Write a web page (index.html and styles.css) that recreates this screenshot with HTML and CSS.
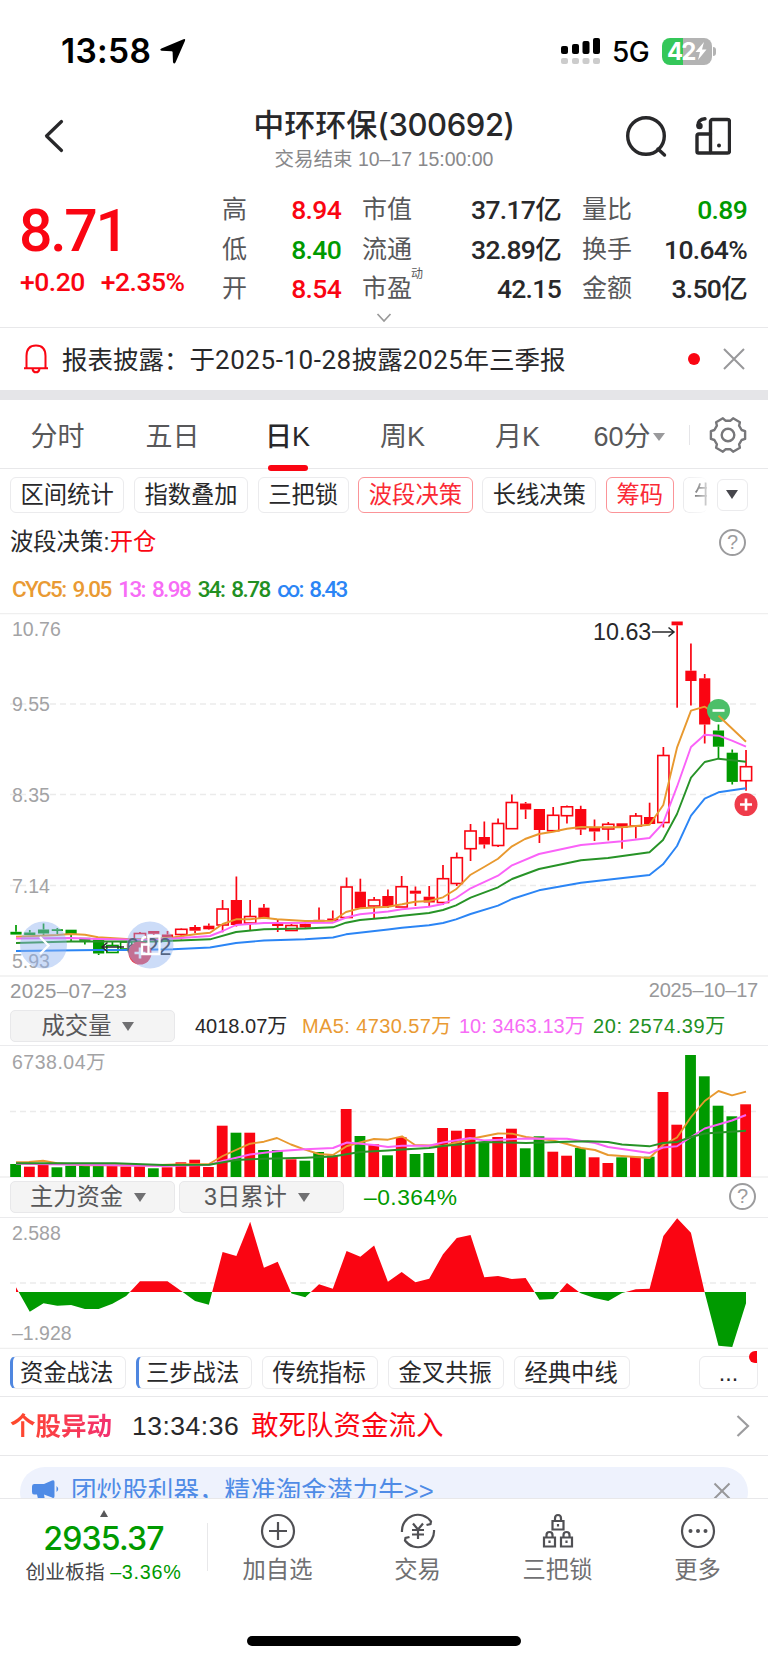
FILE: index.html
```html
<!DOCTYPE html>
<html lang="zh-CN">
  <head>
    <meta charset="UTF-8" />
    <meta name="viewport" content="width=device-width, initial-scale=1.0" />
    <title>中环环保(300692)</title>
    <link rel="stylesheet" href="styles.css">
  </head>
  <body>
    <div class="status-bar">
      <span class="clock">13:58</span>
      <svg class="location" width="27" height="27" viewBox="0 0 27 27">
        <path d="M24.5 1.2 Q26.8 0.2 26 2.7 L16.6 24.3 Q15.2 26.8 14 24.2 L13.6 14 Q13.5 13.2 12.6 13.2 L2.6 12.8 Q0 12 2.4 10.6 Z" />
      </svg>
      <svg class="signal" width="40" height="28" viewBox="0 0 40 28">
        <g fill="#000">
          <rect x="0" y="9" width="7" height="8" rx="2" />
          <rect x="11" y="7" width="7" height="10" rx="2" />
          <rect x="21.5" y="4" width="7" height="13" rx="2" />
          <rect x="32" y="1" width="7" height="16" rx="2" />
        </g>
        <g fill="#ccc">
          <rect x="0" y="21" width="7" height="6" rx="2" />
          <rect x="11" y="21" width="7" height="6" rx="2" />
          <rect x="21.5" y="21" width="7" height="6" rx="2" />
          <rect x="32" y="21" width="7" height="6" rx="2" />
        </g>
      </svg>
      <span class="network">5G</span>
      <div class="battery">
        <span>42</span>
        <svg width="12" height="18" viewBox="0 0 12 18"><path d="M9 0 L0.5 10 H5 L3 18 L11.5 7.5 H7 Z" fill="#fff" /></svg>
      </div>
      <i class="battery-tip"></i>
    </div>

    <div class="nav">
      <svg class="back" width="22" height="34" viewBox="0 0 22 34">
        <path d="M18.5 2.5 L3.5 17 L18.5 31.5" />
      </svg>
      <div class="nav-title">
        <h1>中环环保<span>(300692)</span></h1>
        <p>交易结束 <span>10–17 15:00:00</span></p>
      </div>
      <svg class="nav-icons" width="106" height="44" viewBox="0 0 106 44">
        <circle cx="21" cy="22" r="18.3" />
        <path d="M33 35 L39.5 41" />
        <rect x="85.5" y="5.5" width="19" height="33.5" rx="2" />
        <path d="M85.5 39 H73.5 Q72 39 72 37.5 V22 Q72 20 74 20 H85.5" />
        <path d="M80 4.8 Q73 5.5 73 11.5" />
        <circle class="fill" cx="74.5" cy="12" r="3.2" />
        <circle class="fill" cx="94" cy="31.5" r="2" />
      </svg>
    </div>

    <div class="quote">
      <div class="price">
        <div class="last">8.71</div>
        <div class="change"><span>+0.20</span><span>+2.35%</span></div>
      </div>
      <dl class="stats">
        <dt>高</dt><dd class="up">8.94</dd><dt>市值</dt><dd>37.17亿</dd><dt>量比</dt><dd class="down">0.89</dd>
        <dt>低</dt><dd class="down">8.40</dd><dt>流通</dt><dd>32.89亿</dd><dt>换手</dt><dd>10.64%</dd>
        <dt>开</dt><dd class="up">8.54</dd><dt>市盈<sup>动</sup></dt><dd>42.15</dd><dt>金额</dt><dd>3.50亿</dd>
      </dl>
      <svg class="expand" width="16" height="10" viewBox="0 0 16 10"><path d="M1.5 1 L8 8 L14.5 1" /></svg>
    </div>

    <div class="notice">
      <svg class="bell" width="26" height="30" viewBox="0 0 26 30">
        <path d="M1 24.3 H25 M3.5 24 V12 Q3.5 1.5 13 1.5 Q22.5 1.5 22.5 12 V24" />
        <path d="M9.5 25 Q10 28.3 13 28.3 Q16 28.3 16.5 25" />
      </svg>
      <span class="notice-text">报表披露：于<b>2025-10-28</b>披露<b>2025</b>年三季报</span>
      <i class="dot"></i>
      <svg class="close" width="24" height="24" viewBox="0 0 24 24"><path d="M2 2 L22 22 M22 2 L2 22" /></svg>
    </div>

    <div class="tabs">
      <span>分时</span>
      <span>五日</span>
      <span class="active">日K</span>
      <span>周K</span>
      <span>月K</span>
      <span class="minutes">60分<i class="caret"></i></span>
      <svg class="gear" width="38" height="38" viewBox="0 0 38 38">
        <path id="gear-path" />
        <circle cx="19" cy="19" r="6.3" />
      </svg>
    </div>

    <div class="chips">
      <span class="chip">区间统计</span>
      <span class="chip">指数叠加</span>
      <span class="chip">三把锁</span>
      <span class="chip on">波段决策</span>
      <span class="chip">长线决策</span>
      <span class="chip on">筹码</span>
      <span class="chip fade">牛</span>
      <span class="chip more"><i class="caret dark"></i></span>
    </div>

    <div class="signal-row">
      <span>波段决策:<em>开仓</em></span>
      <span class="help">?</span>
    </div>

    <div class="cyc">
      <span class="c5">CYC5: 9.05</span>
      <span class="c13">13: 8.98</span>
      <span class="c34">34: 8.78</span>
      <span class="cinf">∞: 8.43</span>
    </div>

    <svg class="chart" width="768" height="364" viewBox="0 613 768 364">
      <g class="frame"><path d="M0 613.5 H768 M0 976 H768" /></g>
      <g class="grid"><path d="M10 704 H757 M10 794.5 H757 M10 885.5 H757" /></g>
      <g class="axis">
        <text x="12" y="635.5">10.76</text>
        <text x="12" y="711">9.55</text>
        <text x="12" y="802">8.35</text>
        <text x="12" y="893">7.14</text>
        <text x="12" y="968">5.93</text>
      </g>
      <g id="candles"></g>
      <g class="lines">
        <polyline class="s5" points="16,936.7 57,935 71,934 85,934.7 98,937.3 126,939 153,939 173,937.5 195,934.3 210,932.7 222.7,924 236,919.3 250,919.3 264,917.7 277,919.3 305,921 333,920.7 346,912 360,908.3 388,906.7 402,904.3 415,901.7 429,901 443,897.3 456,889.3 470.6,874.7 484.5,866.7 498,858.7 512,846.3 525,839 539,834 553,831.7 567,828.7 581,827 595,827.3 622,827.3 636,826 649.5,824.7 663.3,805 677,747.7 691,710.7 704.7,706.7 718.5,715.7" />
        <polyline class="s13" points="16,938.5 71,938 98,939 153,940 181,938 210,936 222.7,931 236,925 264,923 333,922.7 347,917.3 360,914.3 388,911.5 402,909.3 429,906.7 443,904 456,898 470.6,888.3 498,875.7 512,865.3 539,854 581,845 622,841.3 649.5,838 663,823.3 677,786.7 691,747 704.7,734.7 718.5,735.7 732,740.7 746,746.7" />
        <polyline class="s34" points="16,943 71,941.5 153,941.5 210,939.3 236,932 264,929.3 305,928.5 333,927.3 346,922.7 360,920 388,917.5 402,915.7 429,913 443,910 456,905.3 470.6,897.7 498,887.3 512,879 539,869 581,860.3 608,858 649.5,852.3 663,840 677,814 691,777.7 704.7,762 718.5,758.7 746,761.7" />
        <polyline class="sinf" points="16,951 98,950 126,950 173,949.3 210,947.5 236,943 264,940.5 305,939.3 333,937.5 346,934.3 388,929.5 402,927.7 429,925.3 443,923 456,919.3 470.6,914 498,905.7 512,899 539,890.3 581,882.7 649.5,875 663,864.3 677,846 691,815.7 704.7,798.7 718.5,792.3 746,788.3" />
      </g>
      <g class="callout">
        <text x="593" y="640">10.63</text>
        <path d="M652 632 H674 M668.5 627.5 L674 632 L668.5 636.5" />
        <text x="126" y="955">6.22</text>
        <path d="M102 947 H124 M107.5 942.5 L102 947 L107.5 951.5" />
      </g>
      <g class="marker">
        <circle cx="718.5" cy="710.5" r="11.5" fill="#4cbf69" />
        <path d="M712.5 710.5 H724.5" />
        <circle cx="746" cy="804.5" r="11.5" fill="#ef3b4a" />
        <path d="M740 804.5 H752 M746 798.5 V810.5" />
        <circle cx="140" cy="953" r="11.5" fill="#ef3b4a" />
        <path d="M134.5 953 H145.5 M140 947.5 V958.5" />
      </g>
      <g class="lines"><polyline class="s5" points="718.5,715.7 732,728.5 746,741.7" /></g>
      <g class="float-btn">
        <circle cx="43.5" cy="945" r="23.5" />
        <path d="M40 937 L48.5 945.5 L40 954" />
        <circle cx="150" cy="945" r="23.5" />
        <path d="M148.5 936 H159.5 V954 H148.5 Z M148.5 954 H142 V944.5 H148.5 M146 937 Q142 937 142 941" />
      </g>
    </svg>

    <div class="dates"><span>2025–07–23</span><span class="to">2025–10–17</span></div>

    <div class="sub-head volume-head">
      <span class="select">成交量<i class="caret mid"></i></span>
      <span class="vol">4018.07万</span>
      <span class="m5">MA5: 4730.57万</span>
      <span class="m10">10: 3463.13万</span>
      <span class="m20">20: 2574.39万</span>
    </div>

    <svg class="chart" width="768" height="132" viewBox="0 1046 768 132">
      <g class="frame"><path d="M0 1177 H768" /></g>
      <g class="grid"><path d="M10 1111.5 H757" /></g>
      <g class="axis wide"><text x="12" y="1068.5">6738.04万</text></g>
      <g id="volumes"></g>
      <g class="lines">
        <polyline class="s5" points="16,1162.3 29,1162 43,1160.7 57,1163.3 85,1165.3 153,1165.3 181,1164.3 209,1164 222.7,1156 250,1143.7 264,1141.7 277,1138 291,1144.5 305,1149.7 319,1154 333,1155 347,1146 360,1142.5 374,1139 388,1139.7 402,1136.3 415,1145 443,1146 470,1139 498,1133.5 512,1133.7 526,1137 553,1140.5 567,1144 581,1148 595,1150 608,1155 649.5,1158 663,1145 677,1137.5 691,1117 704.7,1101 718.5,1091 732,1095.3 746,1091.7" />
        <polyline class="s13" points="16,1163.7 100,1165 163,1166 209,1165 222.7,1161 250,1154.5 277,1151.3 305,1149.3 333,1148 347,1142.5 374,1145 388,1147 402,1145.7 429,1145.7 443,1142.5 470,1138 484,1140.5 526,1138.5 567,1138.7 595,1143 608,1147 636,1151 649.5,1153 663,1147.5 677,1146.3 691,1137 704.7,1128.5 732,1120.5 746,1115" />
        <polyline class="s34" points="16,1163.3 115,1163.3 163,1165 209,1164.7 236,1160 264,1158.7 305,1157.7 333,1156.5 360,1152 388,1150.5 402,1149.5 429,1148 443,1146 484,1142 526,1143 567,1141.7 588,1141.3 608,1142 622,1144.5 649.5,1146.3 663,1143 677,1142 691,1137 704.7,1133.5 746,1130.7" />
      </g>
    </svg>

    <div class="sub-head fund-head">
      <span class="select">主力资金<i class="caret mid"></i></span>
      <span class="select">3日累计<i class="caret mid"></i></span>
      <span class="ratio">–0.364%</span>
      <span class="help">?</span>
    </div>

    <svg class="chart" width="768" height="131" viewBox="0 1218 768 131">
      <clipPath id="above"><rect x="0" y="1218" width="768" height="74" /></clipPath>
      <clipPath id="below"><rect x="0" y="1292" width="768" height="57" /></clipPath>
      <g class="frame"><path d="M0 1348.5 H768" /></g>
      <g class="grid"><path d="M10 1283 H757" /></g>
      <g class="axis">
        <text x="12" y="1240">2.588</text>
        <text x="12" y="1340">–1.928</text>
      </g>
      <polygon class="fund" clip-path="url(#above)" fill="#fa0512" />
      <polygon class="fund" clip-path="url(#below)" fill="#009a00" />
    </svg>

    <div class="methods">
      <span class="chip mark">资金战法</span>
      <span class="chip mark">三步战法</span>
      <span class="chip">传统指标</span>
      <span class="chip">金叉共振</span>
      <span class="chip">经典中线</span>
      <span class="chip dots">...<i></i></span>
    </div>

    <div class="alert">
      <b>个股异动</b>
      <span class="time">13:34:36</span>
      <span class="msg">敢死队资金流入</span>
      <svg width="14" height="24" viewBox="0 0 14 24"><path d="M1.5 2 L12 12 L1.5 22" /></svg>
    </div>

    <div class="promo-wrap">
      <div class="promo">
        <svg class="horn" width="28" height="26" viewBox="0 0 28 26">
          <path d="M2 5 H12 L20 1.5 Q22.5 0.5 22.5 3 V17 Q22.5 20 20 18.5 L12 15.5 L13.5 24 H7 L5 15.5 H2 Q0 15.5 0 13 V7.5 Q0 5 2 5 Z M24.5 7 Q28 10 24.5 13 Z" />
        </svg>
        <span>团炒股利器，精准淘金潜力牛&gt;&gt;</span>
        <svg class="close" width="18" height="18" viewBox="0 0 18 18"><path d="M1.5 1.5 L16.5 16.5 M16.5 1.5 L1.5 16.5" /></svg>
      </div>
    </div>

    <div class="bottom-bar">
      <div class="index">
        <i class="tri"></i>
        <div class="index-value">2935.37</div>
        <div class="index-name">创业板指 <span>–3.36%</span></div>
      </div>
      <div class="action">
        <svg width="38" height="38" viewBox="0 0 38 38"><circle cx="19" cy="19" r="16" /><path d="M19 10 V28 M10 19 H28" /></svg>
        <span>加自选</span>
      </div>
      <div class="action">
        <svg width="38" height="38" viewBox="0 0 38 38">
          <path d="M3 20 A16 16 0 0 1 32 9.5 L31.5 12 L27.5 13 M35 18 A16 16 0 0 1 6 28.5 L6.5 26 L10.5 25" />
          <path d="M14 11.5 L19 17.5 L24 11.5 M19 17.5 V27 M13 18 H25 M13 22.5 H25" />
        </svg>
        <span>交易</span>
      </div>
      <div class="action">
        <svg width="38" height="38" viewBox="0 0 38 38">
          <path d="M13.5 9 H24.5 V17.5 H13.5 Z M16 9 V6.5 Q16 3 19 3 Q22 3 22 6.5 V9" />
          <path d="M5 25.5 H16 V34.5 H5 Z M7.5 25.5 V23 Q7.5 20 10.5 20 Q13.5 20 13.5 23 V25.5" />
          <path d="M22 25.5 H33 V34.5 H22 Z M24.5 25.5 V23 Q24.5 20 27.5 20 Q30.5 20 30.5 23 V25.5" />
          <path d="M19 12 V14.5 M10.5 28.5 V31 M27.5 28.5 V31" />
        </svg>
        <span>三把锁</span>
      </div>
      <div class="action">
        <svg width="38" height="38" viewBox="0 0 38 38"><circle cx="19" cy="19" r="16" /><g class="fill"><circle cx="11.5" cy="19" r="2" /><circle cx="19" cy="19" r="2" /><circle cx="26.5" cy="19" r="2" /></g></svg>
        <span>更多</span>
      </div>
    </div>
    <div class="home-line"></div>

    <script src="chart.js"></script>
  </body>
</html>
```
FILE: chart.js
```js
const RED = "#fa0512";
const GREEN = "#009a00";
const xAt = (i) => 16 + i * 13.774;

// [wick top, body top, body bottom, wick bottom, type]
// u: hollow red, r: solid red, g: solid green, h: hollow green
const candles = [
  [925, 931.8, 934.6, 934.6, "g"], [930, 932.5, 935, 935, "g"], [923.5, 929.5, 933.5, 935, "g"],
  [928, 929.2, 931, 934, "g"], [929.7, 929.7, 935, 941.7, "g"], [937.8, 937.8, 940.8, 944.5, "g"],
  [939.5, 939.5, 953.5, 955, "g"], [942, 945.5, 952.5, 952.5, "h"], [941, 942, 949, 949, "h"],
  [932, 933.5, 942, 942, "u"], [931, 931, 933.8, 937, "r"], [931, 934.5, 937, 937, "r"],
  [928.5, 929.3, 934.5, 939.5, "u"], [925, 927, 930.7, 933, "r"], [923.5, 925.7, 929.3, 929.7, "r"],
  [900, 909, 925, 932.3, "u"], [876.5, 900, 925, 926.5, "r"], [900, 916.5, 923, 930, "u"],
  [904, 907.7, 918.5, 918.5, "r"], [920, 922, 926, 932, "r"], [924, 925.5, 930.5, 930.5, "u"],
  [923.5, 924, 927.5, 929, "r"], [907.5, 919.8, 921.5, 921.5, "r"], [910.5, 918.5, 921, 921, "r"],
  [877.5, 887, 917.5, 917.5, "u"], [878.7, 891.7, 908.5, 908.5, "r"], [897, 900, 906, 918.5, "u"],
  [889.5, 896, 906.5, 908, "r"], [876, 886.7, 907, 907, "u"], [886.5, 890.7, 893.7, 906, "r"],
  [886, 896.7, 902.5, 906, "r"], [865, 878.7, 902.5, 905, "u"], [852.5, 857.7, 883.5, 886, "u"],
  [824, 831, 848.7, 861, "u"], [821.5, 837, 844.5, 848.5, "r"], [818.5, 823.5, 845.5, 847, "u"],
  [794.5, 802.5, 828.7, 828.7, "u"], [802, 803.5, 809.5, 819, "r"], [809, 809, 830, 843, "r"],
  [807, 815.3, 830.7, 830.7, "u"], [805.5, 806.8, 815.7, 823.5, "u"], [805.7, 809, 829.5, 835, "r"],
  [819.5, 827.7, 831.5, 841, "r"], [822, 824.3, 829, 840.5, "u"], [823.3, 823.3, 828, 848.7, "r"],
  [813, 816, 826, 838.5, "u"], [802.7, 817, 824, 824, "r"], [747, 755.5, 822.5, 827.5, "u"],
  [621.5, 621.5, 625.3, 707.7, "r"], [643.5, 670.7, 681, 705.5, "r"], [674, 678.3, 724.5, 743.5, "r"],
  [724.5, 730.5, 746.7, 759, "g"], [749.5, 752.7, 781.9, 784.5, "g"], [750, 766.7, 780.7, 790.7, "u"],
];

document.getElementById("candles").innerHTML = candles
  .map(([top, open, close, bottom, type], i) => {
    const x = xAt(i);
    const color = type === "u" || type === "r" ? RED : GREEN;
    const hollow = type === "u" || type === "h";
    const body = hollow
      ? `<rect x="${x - 5.6}" y="${open}" width="11.2" height="${close - open}" fill="none" stroke="${color}" stroke-width="1.6" />`
      : `<rect x="${x - 5.6}" y="${open}" width="11.2" height="${close - open}" fill="${color}" />`;
    return `<path d="M${x} ${top} V${open} M${x} ${close} V${bottom}" stroke="${color}" stroke-width="1.7" />${body}`;
  })
  .join("");

// top of every bar, and its colour: r up, g down
const volumes = [
  1164, 1166.7, 1164.7, 1167.3, 1165.7, 1165.3, 1165.7, 1165.5, 1166.5, 1166.3, 1168.3, 1167.3, 1162.3, 1159.7,
  1167, 1125.7, 1132.7, 1132.7, 1150, 1150, 1159.3, 1160.7, 1152, 1155.5, 1109, 1136, 1144.3, 1155.3, 1137.3,
  1154, 1153, 1128, 1130.7, 1129, 1142, 1137, 1128.7, 1148.3, 1136.3, 1151.7, 1155.7, 1148, 1157.3, 1163,
  1157.3, 1156.7, 1156.7, 1092, 1124.7, 1055, 1076.3, 1105.7, 1116.3, 1104.3,
];
const signs = "grrggggrrrgrrrrrgrggrggrrgrgrggrrrgrrggrrgrrgrgrrggggr";

document.getElementById("volumes").innerHTML = volumes
  .map((y, i) => `<rect x="${xAt(i) - 5.8}" y="${y}" width="10.8" height="${1177 - y}" fill="${signs[i] === "r" ? RED : GREEN}" />`)
  .join("");

const fund = [
  1287.3, 1311.7, 1303.3, 1305.7, 1305, 1309, 1309, 1303.7, 1296, 1281.3, 1281.3, 1281.3, 1291, 1301, 1304.7,
  1252, 1256, 1221.7, 1267.7, 1261.7, 1293.5, 1297.3, 1284.3, 1288.7, 1251, 1256.7, 1245.5, 1281.7, 1272,
  1282.3, 1278.7, 1254.3, 1238, 1235, 1277.3, 1276, 1279, 1278, 1299.7, 1299, 1283, 1293.3, 1298, 1301,
  1293, 1289.3, 1288.7, 1236, 1218.3, 1232.7, 1292.5, 1345.7, 1347, 1303.3,
];
const outline = [[16, 1292], ...fund.map((y, i) => [xAt(i), y]), [746, 1292]].map((p) => p.join(",")).join(" ");
document.querySelectorAll(".fund").forEach((el) => el.setAttribute("points", outline));

// six-tooth gear outline
const gear = [];
for (let i = 0; i < 6; i++) {
  [[-13, 17.5], [13, 17.5], [20, 14.5], [40, 14.5]].forEach(([deg, r]) => {
    const a = ((i * 60 + 30 + deg) * Math.PI) / 180;
    gear.push(`${(19 + r * Math.sin(a)).toFixed(1)} ${(19 - r * Math.cos(a)).toFixed(1)}`);
  });
}
document.getElementById("gear-path").setAttribute("d", `M${gear.join(" L")} Z`);
```
FILE: styles.css
```css
* {
  box-sizing: border-box;
}

body {
  margin: 0;
  width: 768px;
  height: 1663px;
  overflow: hidden;
  background: #fff;
  color: #28282a;
  font-family: "Liberation Sans", "Noto Sans CJK SC", sans-serif;
}

svg {
  display: block;
  flex: none;
}

i,
em {
  font-style: normal;
}

.status-bar {
  display: flex;
  align-items: center;
  height: 102px;
  padding-left: 61px;
  color: #000;
  font-family: Inter, sans-serif;
}

.clock {
  width: 98px;
  font-size: 33.5px;
  font-weight: 600;
  letter-spacing: 0.3px;
}

.signal {
  margin-left: 375px;
}

.network {
  width: 50px;
  margin-left: 11px;
  padding-top: 2px;
  font-size: 28px;
  font-weight: 500;
  letter-spacing: -0.6px;
}

.battery {
  display: flex;
  align-items: center;
  width: 50px;
  height: 27px;
  padding-left: 5px;
  border-radius: 8px;
  background: linear-gradient(90deg, #34c759 42%, #b3b3b3 42%);
  color: #fff;
  font-size: 24px;
  font-weight: 700;
  letter-spacing: -2px;
  line-height: 27px;
}

.battery svg {
  margin-left: 1px;
}

.battery-tip {
  width: 3px;
  height: 9px;
  margin-left: 1px;
  border-radius: 0 3px 3px 0;
  background: #b3b3b3;
}

.nav {
  display: flex;
  height: 78px;
  padding-top: 3px;
}

.back {
  margin: 14px 0 0 43px;
  fill: none;
  stroke: #28282a;
  stroke-width: 3.2;
  stroke-linecap: round;
  stroke-linejoin: round;
}

.nav-title {
  width: 482px;
  margin-left: 78px;
  text-align: center;
  white-space: nowrap;
}

.nav-title h1 {
  margin: 0;
  font-size: 31px;
  font-weight: 500;
  line-height: 40px;
}

.nav-title h1 span {
  font-family: Inter, sans-serif;
  font-size: 31px;
  letter-spacing: -0.4px;
}

.nav-title p {
  margin: 0;
  color: #88888a;
  font-size: 19.5px;
  line-height: 26px;
}

.nav-icons {
  margin: 9px 0 0 0;
  fill: none;
  stroke: #28282a;
  stroke-width: 3.4;
  stroke-linecap: round;
}

.nav-icons .fill {
  fill: #28282a;
  stroke: none;
}

.quote {
  display: grid;
  grid-template-columns: 222px 525px;
  grid-template-rows: 118px 19px;
  height: 148px;
  padding-top: 10px;
  border-bottom: 1px solid #e8e8ea;
}

.price {
  padding-left: 19px;
  color: #fa0512;
  font-family: Roboto, sans-serif;
}

.last {
  height: 73px;
  padding-top: 4px;
  font-size: 59px;
  font-weight: 500;
  line-height: 73px;
  letter-spacing: -2.3px;
}

.change {
  display: flex;
  gap: 16px;
  padding: 3px 0 0 1px;
  font-size: 26.5px;
  font-weight: 500;
  line-height: 32px;
  letter-spacing: -0.5px;
}

.stats {
  display: grid;
  grid-template-columns: 60px 59px 91px 129px 91px 95px;
  grid-template-rows: repeat(3, 39.5px);
  margin: 0;
  line-height: 39px;
}

.stats dt {
  color: #58585a;
  font-size: 25px;
}

.stats dt:nth-of-type(3n + 2),
.stats dt:nth-of-type(3n) {
  padding-left: 21px;
}

.stats dd {
  margin: 0;
  font-family: Roboto, "Noto Sans CJK SC", sans-serif;
  font-size: 26.5px;
  font-weight: 500;
  text-align: right;
  letter-spacing: -0.7px;
}

.stats sup {
  position: absolute;
  margin: -14px 0 0 -1px;
  font-size: 12px;
}

.up {
  color: #fa0512;
}

.down {
  color: #009a00;
}

.expand {
  grid-column: 1 / 3;
  margin: 5px 0 0 376px;
  fill: none;
  stroke: #999;
  stroke-width: 1.7;
}

.notice {
  display: flex;
  align-items: center;
  height: 72px;
  padding: 0 22px 0 23px;
  border-bottom: 10px solid #e5e5e8;
}

.bell {
  fill: none;
  stroke: #fa0512;
  stroke-width: 2;
}

.notice-text {
  width: 627px;
  margin-left: 13px;
  padding-top: 1px;
  font-size: 25.5px;
  line-height: 36px;
  white-space: nowrap;
}

.notice-text b {
  font-family: Roboto, sans-serif;
  font-weight: 400;
  font-size: 26px;
  letter-spacing: 0.55px;
}

.dot {
  width: 12px;
  height: 12px;
  margin-right: 22px;
  border-radius: 50%;
  background: #fa0512;
}

.close {
  fill: none;
  stroke: #98989a;
  stroke-width: 2;
}

.tabs {
  display: grid;
  grid-template-columns: repeat(6, 115px) 78px;
  height: 69px;
  border-bottom: 1px solid #e8e8ea;
  color: #58585a;
  font-size: 27px;
  line-height: 74px;
  text-align: center;
}

.tabs span {
  position: relative;
  height: 72px;
}

.tabs .active {
  color: #28282a;
  font-weight: 500;
}

.tabs .active::after {
  position: absolute;
  left: 38px;
  bottom: 1px;
  width: 40px;
  height: 6px;
  border-radius: 3px;
  background: #fa0512;
  content: "";
}

.tabs .minutes {
  padding-right: 7px;
}

.gear {
  box-sizing: content-box;
  margin: 16px 0 0 -1px;
  padding-left: 20px;
  fill: none;
  stroke: #77777a;
  stroke-width: 2.4;
  stroke-linejoin: round;
  background: linear-gradient(#e5e5e8, #e5e5e8) 0 50% / 1px 20px no-repeat;
}

.minutes .caret {
  margin-left: 2px;
}

.caret {
  display: inline-block;
  margin-left: 3px;
  border: 6px solid transparent;
  border-top: 8px solid #9a9a9c;
  border-bottom: 0;
  vertical-align: 5px;
}

.caret.dark {
  border-top: 9px solid #46464c;
  margin: 0;
  vertical-align: 3px;
}

.caret.mid {
  margin-left: 11px;
  border-top: 9px solid #707072;
  vertical-align: 3px;
}

.chips {
  display: flex;
  gap: 9.7px;
  height: 55px;
  padding: 8px 0 0 10px;
}

.chip {
  flex: none;
  height: 36px;
  padding: 0 9.5px;
  border: 1.5px solid #ebebed;
  border-radius: 6px;
  font-size: 23.3px;
  line-height: 35px;
  white-space: nowrap;
}

.chip.on {
  border-color: #fb9498;
  color: #fa2a35;
}

.chip.fade {
  width: 24px;
  overflow: hidden;
  border-right: 0;
  -webkit-mask-image: linear-gradient(90deg, #000, #0003);
  mask-image: linear-gradient(90deg, #000, #0003);
}

.chip.more {
  width: 31px;
  height: 32px;
  margin-top: 2px;
  padding: 0 8px;
  line-height: 28px;
}

.signal-row {
  display: flex;
  align-items: center;
  justify-content: space-between;
  height: 36px;
  padding: 0 22px 0 10px;
  font-size: 23.3px;
  line-height: 37px;
}

.signal-row em {
  color: #fa0512;
}

.help {
  width: 27px;
  height: 27px;
  border: 2.3px solid #9c9c9e;
  border-radius: 50%;
  color: #9c9c9e;
  font-size: 20px;
  line-height: 23px;
  text-align: center;
}

.cyc {
  display: flex;
  gap: 7.5px;
  height: 53px;
  padding: 0 0 0 12px;
  font-family: Roboto, sans-serif;
  font-size: 22.5px;
  font-weight: 500;
  line-height: 58px;
  letter-spacing: -1.6px;
  word-spacing: 3px;
  white-space: pre;
}

.c5,
.m5 {
  color: #e99a33;
}

.c13,
.m10 {
  color: #f76cf6;
}

.c34,
.m20 {
  color: #229022;
}

.cinf {
  color: #2b85f5;
  letter-spacing: -1.9px;
}

.frame path {
  stroke: #efefef;
  stroke-width: 1.6;
}

.grid path {
  stroke: #ebebeb;
  stroke-width: 1.6;
  stroke-dasharray: 6 4;
}

.axis text {
  fill: #a3a3a5;
  font-size: 19.5px;
}

.axis.wide text {
  letter-spacing: 0.5px;
}

.lines polyline {
  fill: none;
  stroke-width: 1.9;
  stroke-linejoin: round;
}

.lines .s5 {
  stroke: #e8992f;
}

.lines .s13 {
  stroke: #fa62f8;
}

.lines .s34 {
  stroke: #279327;
}

.lines .sinf {
  stroke: #2b85f5;
}

.callout text {
  fill: #28282a;
  font-size: 23.3px;
}

.callout path {
  fill: none;
  stroke: #28282a;
  stroke-width: 1.5;
}

.marker path {
  stroke: #fff;
  stroke-width: 2.6;
}

.float-btn circle {
  fill: #8fb1f0;
  fill-opacity: 0.45;
}

.float-btn path {
  fill: none;
  stroke: #fff;
  stroke-width: 2.3;
}

.dates {
  display: flex;
  justify-content: space-between;
  height: 27px;
  padding: 0 10px;
  color: #98989a;
  font-size: 20.5px;
  line-height: 27px;
  letter-spacing: 0.3px;
}

.dates .to {
  font-size: 20px;
  letter-spacing: -0.2px;
}

.sub-head {
  display: flex;
  border-bottom: 1px solid #ebebed;
  font-size: 20px;
  white-space: pre;
}

.volume-head {
  height: 42px;
  padding: 6px 0 0 10px;
  line-height: 32px;
}

.fund-head {
  height: 40px;
  padding: 3px 0 0 10px;
  line-height: 32px;
}

.select {
  width: 165px;
  height: 32px;
  margin-right: 4px;
  padding-right: 9px;
  border: 1px solid #e8e8ea;
  border-radius: 5px;
  background: #f4f4f4;
  color: #58585a;
  font-size: 23.3px;
  line-height: 31px;
  text-align: center;
}

.vol {
  width: 107px;
  margin-left: 16px;
}

.m5 {
  width: 157px;
  letter-spacing: 0.4px;
}

.m10 {
  width: 134px;
}

.m20 {
  letter-spacing: 0.6px;
}

.ratio {
  width: 350px;
  margin-left: 16px;
  color: #009a00;
  font-size: 22.8px;
  letter-spacing: 0.5px;
}

.fund-head .help {
  margin: 2px 0 0 15px;
}

.methods {
  display: flex;
  gap: 10.5px;
  height: 48px;
  padding: 7px 0 0 10px;
  border-bottom: 1px solid #e8e8ea;
}

.methods .chip {
  width: 115.5px;
  height: 33px;
  line-height: 32px;
}

.methods .mark {
  border-left: 3.5px solid #4f87e0;
  padding-left: 7px;
}

.methods .dots {
  position: relative;
  width: 59px;
  margin-left: 59px;
  padding: 0;
  text-align: center;
}

.dots i {
  position: absolute;
  top: -6px;
  right: 0;
  width: 8px;
  height: 12px;
  border-radius: 6px 0 0 6px;
  background: #fa0512;
}

.alert {
  display: flex;
  align-items: center;
  height: 59px;
  padding-left: 10px;
  border-bottom: 1px solid #e8e8ea;
  line-height: 40px;
}

.alert b {
  width: 122px;
  background: linear-gradient(90deg, #ff4a28, #f3306e 80%);
  -webkit-background-clip: text;
  background-clip: text;
  color: transparent;
  font-size: 25.5px;
}

.time {
  width: 119px;
  font-size: 26.5px;
  letter-spacing: 0.5px;
}

.msg {
  width: 485px;
  color: #fa0512;
  font-size: 27.5px;
}

.alert svg {
  fill: none;
  stroke: #9c9c9e;
  stroke-width: 2.2;
}

.promo-wrap {
  height: 42px;
  padding: 11px 20px 0;
  overflow: hidden;
}

.promo {
  display: flex;
  height: 50px;
  padding-left: 12px;
  border-radius: 25px;
  background: #eef2fd;
  color: #4f8be6;
  font-size: 25.6px;
  line-height: 48px;
}

.promo span {
  width: 642px;
  margin-left: 11px;
}

.horn {
  margin-top: 12px;
  fill: #4f8be6;
}

.promo .close {
  margin-top: 15px;
}

.bottom-bar {
  display: grid;
  grid-template-columns: 208px repeat(4, 140px);
  height: 138px;
  border-top: 1px solid #e8e8ea;
  background: #fff;
}

.index {
  height: 94px;
  padding: 11px 1px 0 0;
  background: linear-gradient(#e8e8ea, #e8e8ea) 100% 24px / 1px 48px no-repeat;
  text-align: center;
}

.tri {
  display: block;
  width: 0;
  margin: 0 auto;
  border: 4.5px solid transparent;
  border-top: 0;
  border-bottom: 7px solid #58585a;
}

.index-value {
  padding-top: 2px;
  color: #009a00;
  font-family: Inter, sans-serif;
  font-size: 32px;
  font-weight: 500;
  letter-spacing: -0.8px;
  line-height: 40px;
}

.index-name {
  color: #46464a;
  font-size: 19.8px;
  line-height: 26px;
}

.index-name span {
  letter-spacing: 0.7px;
  color: #009a00;
}

.action {
  padding-right: 1px;
  color: #707072;
  font-size: 23.3px;
  line-height: 36px;
  text-align: center;
}

.action svg {
  margin: 13px auto 2px;
  fill: none;
  stroke: #505054;
  stroke-width: 2.2;
}

.action .fill {
  fill: #505054;
  stroke: none;
}

.home-line {
  width: 274px;
  height: 10px;
  margin: 0 auto;
  border-radius: 5px;
  background: #000;
}
```
